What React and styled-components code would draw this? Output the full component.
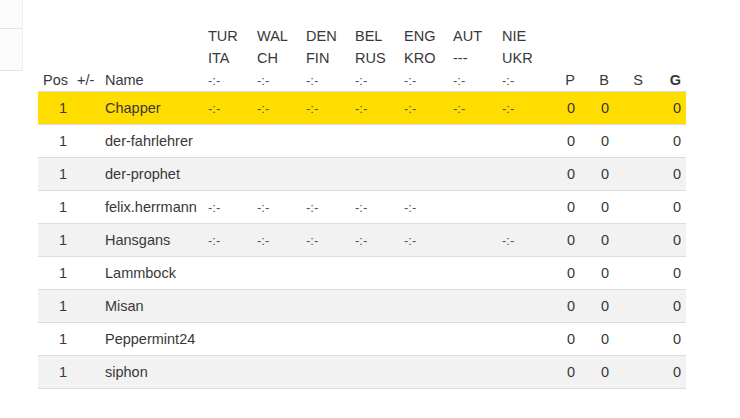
import React from "react";
import styled, { createGlobalStyle } from "styled-components";

const countries = [
  ["TUR", "ITA"],
  ["WAL", "CH"],
  ["DEN", "FIN"],
  ["BEL", "RUS"],
  ["ENG", "KRO"],
  ["AUT", "---"],
  ["NIE", "UKR"],
];

const players = [
  { name: "Chapper", tips: [1, 1, 1, 1, 1, 1, 1], highlight: true },
  { name: "der-fahrlehrer", tips: [] },
  { name: "der-prophet", tips: [] },
  { name: "felix.herrmann", tips: [1, 1, 1, 1, 1] },
  { name: "Hansgans", tips: [1, 1, 1, 1, 1, 0, 1] },
  { name: "Lammbock", tips: [] },
  { name: "Misan", tips: [] },
  { name: "Peppermint24", tips: [] },
  { name: "siphon", tips: [] },
];

function App() {
  return (
    <>
      <GlobalStyle />
      <Page>
        <Sidebar>
          <SideItem $h={29} />
          <SideItem $h={42} />
        </Sidebar>
        <Content>
          <Table>
            <colgroup>
              <col style={{ width: 34 }} />
              <col style={{ width: 28 }} />
              <col style={{ width: 103 }} />
              {countries.map((c) => (
                <col key={c[0]} style={{ width: 49 }} />
              ))}
              <col style={{ width: 34 }} />
              <col style={{ width: 34 }} />
              <col style={{ width: 34 }} />
              <col style={{ width: 38 }} />
            </colgroup>
            <thead>
              <tr>
                <Th $right>Pos</Th>
                <Th>+/-</Th>
                <Th>Name</Th>
                {countries.map((c) => (
                  <Th key={c[0]}>
                    {c[0]}
                    <br />
                    {c[1]}
                    <br />
                    <Dash>-:-</Dash>
                  </Th>
                ))}
                <Th $right>P</Th>
                <Th $right>B</Th>
                <Th $right>S</Th>
                <Th $right $bold>
                  G
                </Th>
              </tr>
            </thead>
            <tbody>
              {players.map((p, i) => (
                <Row key={p.name} $highlight={p.highlight} $odd={i % 2 === 0}>
                  <Td $right>1</Td>
                  <Td></Td>
                  <Td>{p.name}</Td>
                  {countries.map((c, j) => (
                    <Td key={c[0]}>{p.tips[j] ? <Dash>-:-</Dash> : ""}</Td>
                  ))}
                  <Td $right>0</Td>
                  <Td $right>0</Td>
                  <Td $right></Td>
                  <Td $right>0</Td>
                </Row>
              ))}
            </tbody>
          </Table>
        </Content>
      </Page>
    </>
  );
}

const GlobalStyle = createGlobalStyle`
  body {
    margin: 0;
    background: #fff;
    font-family: "Liberation Sans", Arial, sans-serif;
    font-size: 14.5px;
    color: #383838;
  }
`;

const Page = styled.div`
  display: flex;
  align-items: flex-start;
`;

const Sidebar = styled.div`
  width: 23px;
  flex-shrink: 0;
  background: #fcfcfc;
  border-right: 1px solid #f0f0f0;
  box-sizing: border-box;
`;

const SideItem = styled.div`
  height: ${(p) => p.$h}px;
  border-bottom: 1px solid #e4e4e4;
  box-sizing: border-box;
`;

const Content = styled.div`
  padding: 25px 0 0 15px;
`;

const Table = styled.table`
  border-collapse: collapse;
  table-layout: fixed;
  width: 648px;
`;

const Th = styled.th`
  font-weight: ${(p) => (p.$bold ? "bold" : "normal")};
  text-align: ${(p) => (p.$right ? "right" : "left")};
  vertical-align: bottom;
  line-height: 22px;
  padding: 0 5px;
  white-space: nowrap;
`;

const Row = styled.tr`
  background: ${(p) =>
    p.$highlight ? "#ffdd00" : p.$odd ? "#f2f2f2" : "#ffffff"};
`;

const Td = styled.td`
  height: 32px;
  line-height: 32px;
  padding: 0 5px;
  border-top: 1px solid #dddddd;
  border-bottom: 1px solid #dddddd;
  text-align: ${(p) => (p.$right ? "right" : "left")};
  white-space: nowrap;
  overflow: hidden;
`;

const Dash = styled.span`
  font-size: 13px;
  line-height: 1;
  color: #555;
`;

export default App;
